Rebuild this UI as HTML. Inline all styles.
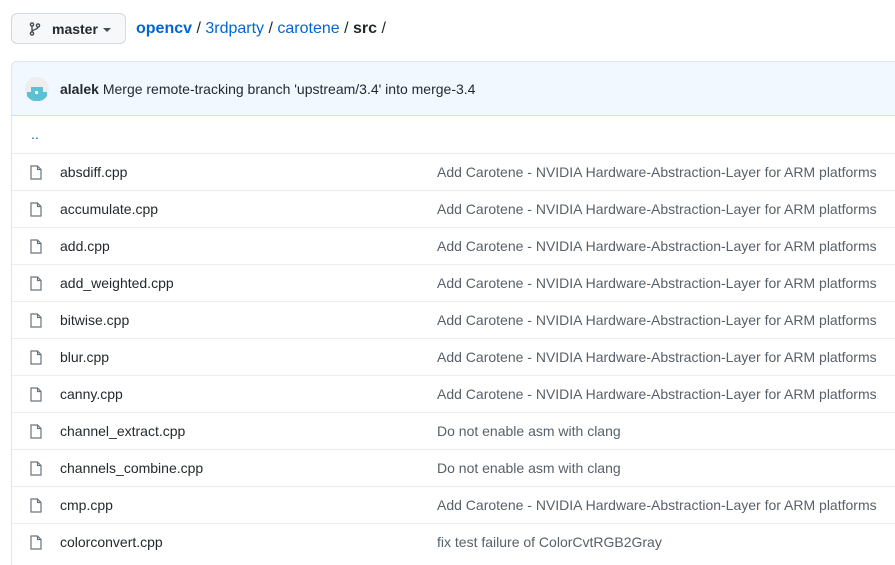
<!DOCTYPE html><html><head><style>
html,body{margin:0;width:895px;height:565px;overflow:hidden}
body{position:relative;background:#fff;font-family:"Liberation Sans",sans-serif;font-size:14px;color:#24292e}
.btn{position:absolute;left:11px;top:13px;width:115px;height:31px;border:1px solid #d5d8dc;border-radius:6px;background:#f6f8fa;box-sizing:border-box}
.btn b{position:absolute;left:40px;top:7px;font-weight:bold;font-size:14px}
.crumb{position:absolute;left:136px;top:20px;font-size:16px;color:#24292e}
.crumb a{color:#0366d6;text-decoration:none}
.box{position:absolute;left:11px;top:61px;width:884px;height:504px;border:1px solid #e1e4e8;border-right:none;border-bottom:none;border-radius:6px 0 0 0;box-sizing:border-box;overflow:hidden}
.hd{height:53px;background:#f1f8ff;border-bottom:1px solid #c8e1ff;border-radius:6px 0 0 0;position:relative}
.row{height:37px;border-top:1px solid #eaecef;position:relative;box-sizing:border-box}
.row .n{position:absolute;left:48px;top:10px}
.row .m{position:absolute;left:425px;top:10px;color:#586069}
.row svg{position:absolute;left:18px;top:11px}
</style></head><body>
<div class="btn"><svg style="position:absolute;left:17px;top:8px" width="12" height="14" viewBox="0 0 12 14" fill="none" stroke="#444d56" stroke-width="1.4"><circle cx="3" cy="2.5" r="1.6"/><circle cx="3" cy="11.5" r="1.6"/><circle cx="9" cy="3.5" r="1.6"/><path d="M3 4v6M9 5c0 3-6 2-6 5"/></svg><b>master</b><svg style="position:absolute;left:91px;top:14px" width="8" height="5"><path d="M0 0h8L4 4z" fill="#444d56"/></svg></div>
<div class="crumb"><a style="font-weight:bold">opencv</a> / <a>3rdparty</a> / <a>carotene</a> / <b>src</b> /</div>
<div class="box">
<div class="hd"><svg style="position:absolute;left:13px;top:15px" width="24" height="24" viewBox="0 0 24 24"><circle cx="12" cy="12" r="12" fill="#eee"/><path d="M2 15h20v4a12 12 0 0 1-20 0z" fill="#5bc2d6"/><path d="M6 10h12v5H6z" fill="#5bc2d6"/><rect x="10" y="14" width="3" height="3" fill="#fff"/></svg><div style="position:absolute;left:48px;top:19px"><b>alalek</b> Merge remote-tracking branch 'upstream/3.4' into merge-3.4</div></div>
<div class="row" style="border-top:none;height:37px"><span style="position:absolute;left:19px;top:10px;color:#0366d6">..</span></div>
<script>
var r=[["absdiff.cpp",0],["accumulate.cpp",0],["add.cpp",0],["add_weighted.cpp",0],["bitwise.cpp",0],["blur.cpp",0],["canny.cpp",0],["channel_extract.cpp",1],["channels_combine.cpp",1],["cmp.cpp",0],["colorconvert.cpp",2]];
var m=["Add Carotene - NVIDIA Hardware-Abstraction-Layer for ARM platforms","Do not enable asm with clang","fix test failure of ColorCvtRGB2Gray"];
r.forEach(function(x){document.write('<div class="row"><svg width="12" height="15" viewBox="0 0 12 15" fill="none" stroke="#6a737d" stroke-width="1.2"><path d="M1 1h6.5L11 4.5V14H1z M7.5 1v3.5H11"/></svg><span class="n">'+x[0]+'</span><span class="m">'+m[x[1]]+'</span></div>')});
</script>
</div>
</body></html>
